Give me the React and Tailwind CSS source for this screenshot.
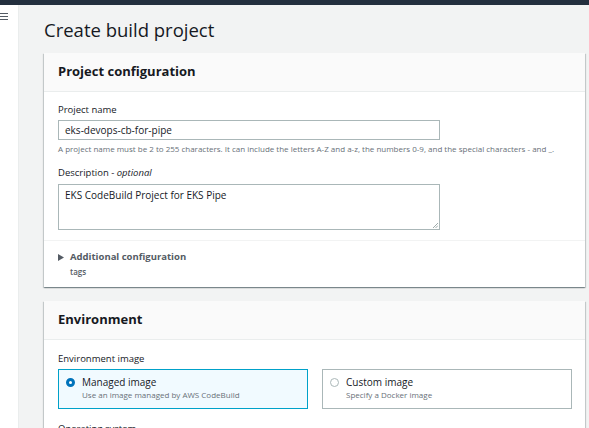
import React from 'react';

const font = { fontFamily: '"Open Sans", "Noto Sans", Arial, sans-serif' };

const Card = ({ title, children }) => (
    <div className="bg-white shadow-[0_1px_1px_0_rgba(0,28,36,0.3),1px_1px_1px_0_rgba(0,28,36,0.15),-1px_1px_1px_0_rgba(0,28,36,0.15)]">
        <div className="h-[39px] bg-[#fafafa] border-b border-[#eaeded] flex items-center px-[14px]">
            <h2 className="text-[13px] font-bold text-[#16191f]">{title}</h2>
        </div>
        {children}
    </div>
);

const Radio = ({ checked }) =>
    checked ? (
        <span className="block w-[9px] h-[9px] rounded-full border-[3px] border-[#0073bb] bg-white" />
    ) : (
        <span className="block w-[9px] h-[9px] rounded-full border border-[#aab7b8] bg-white" />
    );

const Tile = ({ checked, title, sub }) => (
    <div
        className={
            checked
                ? 'h-[40px] border border-[#00a1c9] bg-[#f1faff] flex items-start gap-[7px] pl-[7px] pt-[6px]'
                : 'h-[40px] border border-[#aab7b8] bg-white flex items-start gap-[7px] pl-[7px] pt-[6px]'
        }
    >
        <div className="pt-[2px] shrink-0">
            <Radio checked={checked} />
        </div>
        <div className="flex flex-col">
            <span className="text-[10px] leading-[13px] text-[#16191f]">{title}</span>
            <span className="text-[8px] leading-[11px] text-[#687078]">{sub}</span>
        </div>
    </div>
);

const App = () => {
    return (
        <div className="w-[589px] h-[428px] overflow-hidden bg-[#f2f3f3] flex flex-col" style={font}>
            <div className="h-[5px] bg-[#232f3e] shrink-0" />
            <div className="flex flex-1 min-h-0">
                {/* side nav */}
                <div className="w-[19px] shrink-0 bg-white border-r border-[#eaeded] pt-[8px]">
                    <div className="flex flex-col gap-[2px] w-[8px]">
                        <span className="h-[1px] bg-[#545b64]" />
                        <span className="h-[1px] bg-[#545b64]" />
                        <span className="h-[1px] bg-[#545b64]" />
                    </div>
                </div>

                <div className="flex-1 pl-[25px] pr-[4px]">
                    <h1 className="pt-[11px] text-[18.5px] leading-[28px] text-[#16191f] mb-[9px]">Create build project</h1>

                    <Card title="Project configuration">
                        <div className="px-[14px] pt-[11px] pb-[10px]">
                            <label className="block text-[9.5px] leading-[14px] text-[#16191f]">Project name</label>
                            <div className="mt-[3px] w-[382px] h-[20px] border border-[#aab7b8] flex items-center px-[6px] text-[10px] text-[#16191f]">
                                eks-devops-cb-for-pipe
                            </div>
                            <p className="mt-[3px] text-[8px] leading-[12px] text-[#687078] whitespace-nowrap">
                                A project name must be 2 to 255 characters. It can include the letters A-Z and a-z, the numbers 0-9, and the special characters - and _.
                            </p>
                            <label className="block mt-[11px] text-[9.5px] leading-[14px] text-[#16191f]">
                                Description - <i>optional</i>
                            </label>
                            <div className="relative mt-[4px] w-[382px] h-[46px] border border-[#aab7b8] px-[6px] pt-[3px] text-[10px] leading-[14px] text-[#16191f]">
                                EKS CodeBuild Project for EKS Pipe
                                <svg className="absolute right-[1px] bottom-[1px]" width="5" height="5" viewBox="0 0 5 5">
                                    <path d="M5 0 L0 5 M5 2.5 L2.5 5" stroke="#879596" strokeWidth="0.8" />
                                </svg>
                            </div>
                        </div>
                        <div className="border-t border-[#f2f3f3] px-[14px] pt-[9px] pb-[9px]">
                            <div className="flex items-center gap-[6px]">
                                <svg width="6" height="7" viewBox="0 0 6 7">
                                    <path d="M0 0 L6 3.5 L0 7 Z" fill="#545b64" />
                                </svg>
                                <span className="text-[9.5px] leading-[14px] font-bold text-[#545b64]">Additional configuration</span>
                            </div>
                            <div className="mt-[2px] pl-[12px] text-[8px] leading-[12px] font-semibold text-[#545b64]">tags</div>
                        </div>
                    </Card>

                    <div className="h-[14px]" />

                    <Card title="Environment">
                        <div className="px-[14px] pr-[13px] pt-[12px]">
                            <label className="block text-[9.5px] leading-[14px] text-[#16191f]">Environment image</label>
                            <div className="mt-[3px] grid grid-cols-2 gap-[14px]">
                                <Tile checked title="Managed image" sub="Use an image managed by AWS CodeBuild" />
                                <Tile title="Custom image" sub="Specify a Docker image" />
                            </div>
                            <label className="block mt-[13px] text-[9.5px] leading-[14px] text-[#16191f]">Operating system</label>
                        </div>
                    </Card>
                </div>
            </div>
        </div>
    );
};

export default App;
